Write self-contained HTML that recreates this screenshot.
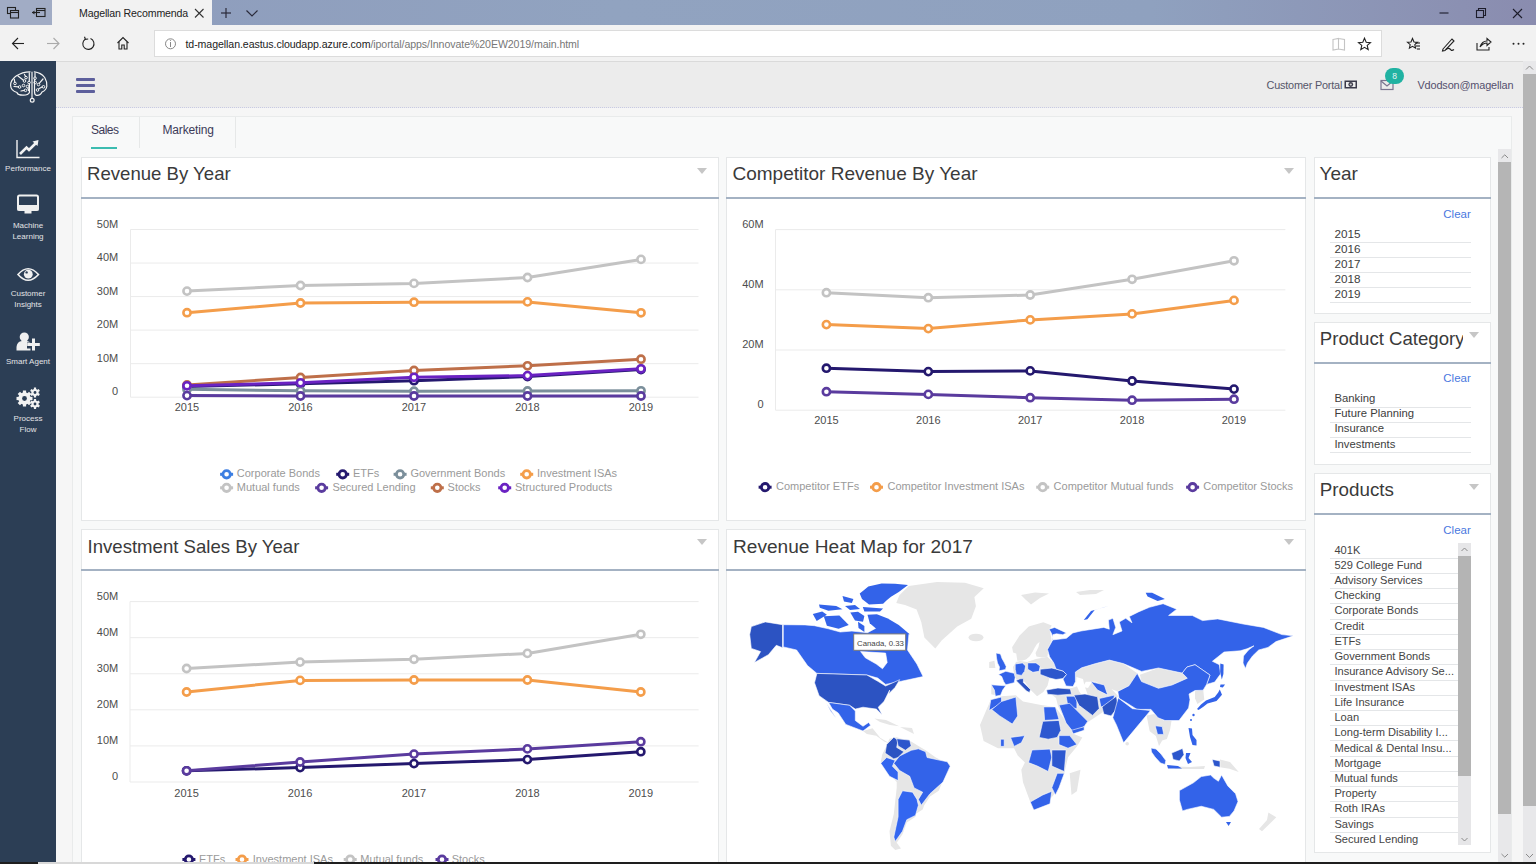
<!DOCTYPE html>
<html><head><meta charset="utf-8"><title>Magellan</title>
<style>
*{margin:0;padding:0;box-sizing:border-box}
html,body{width:1536px;height:864px;overflow:hidden;background:#f6f6f6;font-family:"Liberation Sans",sans-serif}
.a{position:absolute}
#tabstrip{left:0;top:0;width:1536px;height:25px;background:linear-gradient(90deg,#8e9cbc 0%,#91a3c0 40%,#8fa1bf 75%,#8a8caf 100%)}
#tsl{left:0;top:0;width:52px;height:25px;background:#a1acc5}
#acttab{left:52px;top:0;width:160px;height:25px;background:#f2f2f2}
#addrrow{left:0;top:25px;width:1536px;height:36px;background:#f2f2f2}
#addr{left:154px;top:30px;width:1228px;height:27px;background:#fff;border:1px solid #dcdcdc}
#sidebar{left:0;top:61px;width:56px;height:801px;background:#2c3e55}
#header{left:56px;top:61px;width:1467px;height:47px;background:#ececec;border-top:1px solid #dadada;border-bottom:1px dotted #c8cae4}
#content{left:56px;top:108px;width:1467px;height:754px;background:#f6f6f6}
#tabc{left:72px;top:116px;width:1440px;height:760px;background:#f8f9f9;border:1px solid #e9ebeb}
.card{position:absolute;background:#fff;border:1px solid #e5e7e8}
.ttl{position:absolute;color:#3a3a3a;font-size:19px;white-space:nowrap}
.uline{position:absolute;height:2px;background:#a4b2c3}
.tri{position:absolute;width:0;height:0;border-left:5px solid transparent;border-right:5px solid transparent;border-top:6px solid #c6c6c6}
.sl{position:absolute;color:#e3e3e6;font-size:8px;text-align:center;width:56px;left:0;line-height:11.5px}
.ax{font-family:"Liberation Sans",sans-serif;font-size:11px;fill:#4d4d4d}
.lg{font-family:"Liberation Sans",sans-serif;font-size:11px;fill:#9a9a9a}
.fl{position:absolute;font-size:12px;color:#3d3d3d;white-space:nowrap}
.sep{position:absolute;height:1px;background:#e4e6e8}
.clr{position:absolute;color:#4a78e0;font-size:12px}
</style></head><body>
<div id="tabstrip" class="a"></div>
<div id="tsl" class="a"></div>
<svg class="a" style="left:0;top:0" width="60" height="25">
 <g fill="none" stroke="#222" stroke-width="1.1">
  <rect x="7.5" y="7.5" width="8" height="6"/>
  <rect x="10.5" y="10.5" width="8" height="7.5" fill="#a1acc5"/>
  <line x1="10.5" y1="12.5" x2="18.5" y2="12.5"/>
  <rect x="36.5" y="8.5" width="8.5" height="8"/>
  <line x1="36.5" y1="10.5" x2="45" y2="10.5"/>
  <line x1="32" y1="12.5" x2="40" y2="12.5"/>
 </g>
 <path d="M32 12.5 L34.5 10.5 L34.5 14.5 Z" fill="#222"/>
</svg>
<div id="acttab" class="a"></div>
<div class="a" style="left:79px;top:6px;font-size:10.6px;letter-spacing:-0.15px;color:#222;white-space:nowrap;line-height:14px">Magellan Recommenda</div>
<svg class="a" style="left:190px;top:0" width="80" height="25">
 <g stroke="#333" stroke-width="1.1" fill="none">
  <line x1="5" y1="9" x2="13.5" y2="17.5"/><line x1="13.5" y1="9" x2="5" y2="17.5"/>
 </g>
 <g stroke="#2a2a3a" stroke-width="1.2" fill="none">
  <line x1="31" y1="13" x2="41" y2="13"/><line x1="36" y1="8" x2="36" y2="18"/>
  <polyline points="56.5,10.5 62,16 67.5,10.5"/>
 </g>
</svg>
<svg class="a" style="left:1420px;top:0" width="116" height="25">
 <g stroke="#1c1c2a" stroke-width="1.1" fill="none">
  <line x1="19.5" y1="13" x2="28.5" y2="13"/>
  <rect x="56.5" y="10.5" width="7" height="7"/>
  <polyline points="58.5,10.5 58.5,8.5 65.5,8.5 65.5,15.5 63.5,15.5"/>
  <line x1="93" y1="9" x2="102" y2="18"/><line x1="102" y1="9" x2="93" y2="18"/>
 </g>
</svg>
<div id="addrrow" class="a"></div>
<svg class="a" style="left:0;top:25px" width="154" height="36">
 <g fill="none" stroke="#222" stroke-width="1.1">
  <polyline points="18,13 12.5,18.5 18,24"/><line x1="12.5" y1="18.5" x2="24" y2="18.5"/>
 </g>
 <g fill="none" stroke="#aaa" stroke-width="1.1">
  <polyline points="53.5,13 59,18.5 53.5,24"/><line x1="47" y1="18.5" x2="59" y2="18.5"/>
 </g>
 <g fill="none" stroke="#222" stroke-width="1.1">
  <path d="M85.2 14.2 A5.6 5.6 0 1 0 90.5 13.6"/>
  <polyline points="84.5,11.8 85.4,14.3 88.2,14.0"/>
  <polyline points="117.5,18 123,12.5 128.5,18"/>
  <polyline points="119,17 119,24 121.8,24 121.8,20 124.2,20 124.2,24 127,24 127,17"/>
 </g>
</svg>
<div id="addr" class="a"></div>
<svg class="a" style="left:160px;top:33px" width="22" height="22">
 <circle cx="10.5" cy="10.8" r="5" fill="none" stroke="#888" stroke-width="1"/>
 <line x1="10.5" y1="9" x2="10.5" y2="14" stroke="#888" stroke-width="1"/>
 <circle cx="10.5" cy="7.3" r="0.6" fill="#888"/>
</svg>
<div class="a" style="left:185.5px;top:36.5px;font-size:10.6px;letter-spacing:-0.08px;color:#222;white-space:nowrap;line-height:14px">td-magellan.eastus.cloudapp.azure.com<span style="color:#777">/iportal/apps/Innovate%20EW2019/main.html</span></div>
<svg class="a" style="left:1325px;top:30px" width="211" height="28">
 <g fill="none" stroke="#c4c4c4" stroke-width="1.1">
  <path d="M8 9.5 L13.5 8.5 L13.5 19 L8 20 Z M13.5 8.5 L19.5 9.5 L19.5 20 L13.5 19"/>
 </g>
 <path d="M39.5 8.2 L41.2 12.2 L45.5 12.6 L42.2 15.4 L43.2 19.6 L39.5 17.3 L35.8 19.6 L36.8 15.4 L33.5 12.6 L37.8 12.2 Z" fill="none" stroke="#222" stroke-width="1.1"/>
 <g fill="none" stroke="#222" stroke-width="1.1">
  <path d="M87.5 8.5 L89 12 L92.5 12.3 L89.8 14.6 L90.6 18.2 L87.5 16.3 L84.4 18.2 L85.2 14.6 L82.5 12.3 L86 12 Z"/>
  <line x1="90" y1="13" x2="95" y2="13"/><line x1="91" y1="16" x2="95" y2="16"/><line x1="92" y1="19" x2="95" y2="19"/>
  <path d="M118 19 L127 9 L129 11 L120 20.5 L117.5 21 Z"/>
  <path d="M121 19.5 Q124 17 126 20 Q127 21 129 19.5"/>
  <path d="M152 13 L152 20 L164 20 L164 17"/>
  <path d="M155 17 Q157 11 162 11 L162 8.5 L166 12 L162 15.5 L162 13 Q158 13 155 17 Z"/>
 </g>
 <g fill="#222"><circle cx="188.5" cy="13.8" r="1"/><circle cx="193.5" cy="13.8" r="1"/><circle cx="198.5" cy="13.8" r="1"/></g>
</svg>
<div id="sidebar" class="a"></div>
<svg class="a" style="left:0;top:61px" width="56" height="390">
 <g fill="none" stroke="#f4f4f4" stroke-width="1.2" stroke-linecap="round" stroke-linejoin="round">
  <path d="M30,10.8 C26,10.9 21,11.8 16.5,14.8 C12.5,17.5 10.5,21 10.6,24.5 C10.8,28 13.5,30.5 17,31.5 C17.5,33.5 20,34.3 23.5,34.2 C26.5,34.2 28.5,33.6 29.4,31.5 L29.4,23"/>
  <path d="M34.3,10.9 C38,11.3 42,13 44.7,16.5 C46.5,19.5 47.2,22.5 46.8,25.5 C46.3,28 44.5,30 42,31 C41,33.5 39,34.5 36.5,34.3 C35,34.2 34.5,32.5 34.5,30.5 L34.5,18"/>
  <line x1="32" y1="11" x2="32" y2="37.3"/>
  <circle cx="32.2" cy="39.3" r="1.9"/>
  <path d="M24.5,13.5 L25.5,15.2 M18,15 L23.2,19 M29.3,11.8 L29.3,20 M14.2,18 L14.8,21.2 M14,25.5 L18.3,25.8 M28,27.2 L28.6,29.5 M21,30 L24.2,29.3 M35,12 L35,15.8 M43,18 L39.2,22.3 M42,26 L38.8,27.8"/>
 </g>
 <g fill="none" stroke="#f4f4f4" stroke-width="1">
  <circle cx="26" cy="16.6" r="1.3"/><circle cx="24.5" cy="20" r="1.3"/><circle cx="29" cy="21.5" r="1.3"/>
  <circle cx="15" cy="22.5" r="1.3"/><circle cx="19.6" cy="26" r="1.3"/><circle cx="23.5" cy="24.5" r="1.3"/>
  <circle cx="27.5" cy="25.5" r="1.3"/><circle cx="25.5" cy="29.3" r="1.3"/>
  <circle cx="35" cy="17.2" r="1.3"/><circle cx="35.2" cy="21.5" r="1.3"/><circle cx="38.5" cy="23.5" r="1.3"/>
  <circle cx="43.5" cy="25.8" r="1.3"/><circle cx="37.5" cy="29" r="1.3"/>
 </g>
 <!-- performance -->
 <g fill="none" stroke="#f2f2f2">
  <polyline points="17,79 17,96.5 39.5,96.5" stroke-width="1.4"/>
  <polyline points="20,93 26.5,86.5 29,89 37,81" stroke-width="2.6" stroke-linejoin="miter"/>
 </g>
 <path d="M32.5 80.5 L38.5 79 L37.5 85 Z" fill="#f2f2f2"/>
 <!-- monitor -->
 <rect x="18" y="134.5" width="20" height="14.5" rx="1.5" fill="none" stroke="#f0f0f0" stroke-width="2"/>
 <rect x="17.5" y="144" width="21" height="5.5" fill="#f0f0f0"/>
 <rect x="24.5" y="149" width="7" height="3.5" fill="#f0f0f0"/>
 <!-- eye -->
 <path d="M18 213.5 Q28 202 38.5 213.5 Q28 225 18 213.5 Z" fill="none" stroke="#f0f0f0" stroke-width="1.6"/>
 <circle cx="28.3" cy="213.2" r="4.4" fill="#f0f0f0"/>
 <circle cx="26.6" cy="211.4" r="1.2" fill="#2c3e55"/>
 <!-- user plus -->
 <circle cx="24.3" cy="276" r="4.6" fill="#f0f0f0"/>
 <path d="M16.5 289.5 L16.5 286 Q17 280.5 22 280 L27 280 Q29.5 280.5 30.5 282 L30.5 289.5 Z" fill="#f0f0f0"/>
 <rect x="27" y="281.5" width="4" height="6" fill="#2c3e55"/>
 <rect x="27.2" y="282" width="12.6" height="3" fill="#f0f0f0"/>
 <rect x="32" y="277.5" width="3" height="12" fill="#f0f0f0"/>
 <!-- gears -->
 <g fill="#f2f2f2">
  <circle cx="24.5" cy="337.5" r="6.2"/>
  <g transform="translate(24.5 337.5)">
   <rect x="-1.6" y="-8" width="3.2" height="16"/>
   <rect x="-1.6" y="-8" width="3.2" height="16" transform="rotate(45)"/>
   <rect x="-1.6" y="-8" width="3.2" height="16" transform="rotate(90)"/>
   <rect x="-1.6" y="-8" width="3.2" height="16" transform="rotate(135)"/>
  </g>
  <circle cx="35" cy="331.5" r="3.6"/>
  <g transform="translate(35 331.5)">
   <rect x="-1.1" y="-5" width="2.2" height="10"/>
   <rect x="-1.1" y="-5" width="2.2" height="10" transform="rotate(60)"/>
   <rect x="-1.1" y="-5" width="2.2" height="10" transform="rotate(120)"/>
  </g>
  <circle cx="35" cy="343" r="3.6"/>
  <g transform="translate(35 343)">
   <rect x="-1.1" y="-5" width="2.2" height="10"/>
   <rect x="-1.1" y="-5" width="2.2" height="10" transform="rotate(60)"/>
   <rect x="-1.1" y="-5" width="2.2" height="10" transform="rotate(120)"/>
  </g>
 </g>
 <g fill="#2c3e55">
  <circle cx="24.5" cy="337.5" r="2.4"/>
  <circle cx="35" cy="331.5" r="1.4"/>
  <circle cx="35" cy="343" r="1.4"/>
 </g>
</svg>
<div class="sl" style="top:163px">Performance</div>
<div class="sl" style="top:219.5px">Machine<br>Learning</div>
<div class="sl" style="top:287.5px">Customer<br>Insights</div>
<div class="sl" style="top:355.5px">Smart Agent</div>
<div class="sl" style="top:412.5px">Process<br>Flow</div>
<div id="header" class="a"></div>
<div class="a" style="left:76px;top:77.5px;width:18.5px;height:3px;background:#5d5f9c;border-radius:1px"></div>
<div class="a" style="left:76px;top:83.5px;width:18.5px;height:3px;background:#5d5f9c;border-radius:1px"></div>
<div class="a" style="left:76px;top:89.5px;width:18.5px;height:3px;background:#5d5f9c;border-radius:1px"></div>
<div class="a" style="left:1266.5px;top:77.5px;font-size:10.9px;letter-spacing:-0.2px;color:#55566a;white-space:nowrap;line-height:14px">Customer Portal</div>
<svg class="a" style="left:1343px;top:79px" width="16" height="11">
 <rect x="1.5" y="1.5" width="12.5" height="8" fill="#3a3a4a"/>
 <rect x="3" y="3" width="9.5" height="5" fill="#eee"/>
 <circle cx="7.75" cy="5.5" r="2.4" fill="#3a3a4a"/>
 <circle cx="7.75" cy="5.5" r="1.1" fill="#ccc"/>
</svg>
<svg class="a" style="left:1379px;top:78px" width="16" height="14">
 <rect x="2" y="2.5" width="12" height="9" fill="none" stroke="#7a7590" stroke-width="1.2"/>
 <polyline points="2,3 8,8 14,3" fill="none" stroke="#7a7590" stroke-width="1.2"/>
</svg>
<div class="a" style="left:1385px;top:67.5px;width:19px;height:16px;border-radius:8px;background:#20b2a2;color:#e8f5f3;font-size:8.5px;text-align:center;line-height:16px">8</div>
<div class="a" style="left:1417.5px;top:77.5px;font-size:10.9px;letter-spacing:-0.15px;color:#55506e;white-space:nowrap;line-height:14px">Vdodson@magellan</div>
<div id="content" class="a"></div>
<div id="tabc" class="a"></div>
<div class="a" style="left:91px;top:122.5px;font-size:12px;letter-spacing:-0.5px;color:#3c3b58;white-space:nowrap;line-height:14px">Sales</div>
<div class="a" style="left:91px;top:147px;width:26px;height:2px;background:#3cbcb0"></div>
<div class="a" style="left:139px;top:117px;width:1px;height:31px;background:#e6e8e8"></div>
<div class="a" style="left:162.5px;top:122.5px;font-size:12px;letter-spacing:-0.15px;color:#3c3b58;white-space:nowrap;line-height:14px">Marketing</div>
<div class="a" style="left:235px;top:117px;width:1px;height:31px;background:#e6e8e8"></div>

<!-- cards -->
<div class="card" style="left:81px;top:157px;width:638px;height:364px"></div>
<div class="card" style="left:726px;top:157px;width:580px;height:364px"></div>
<div class="card" style="left:81px;top:529px;width:638px;height:400px"></div>
<div class="card" style="left:726px;top:529px;width:580px;height:400px"></div>
<div class="uline" style="left:81px;top:197px;width:638px"></div>
<div class="uline" style="left:726px;top:197px;width:580px"></div>
<div class="uline" style="left:81px;top:569px;width:638px"></div>
<div class="uline" style="left:726px;top:569px;width:580px"></div>
<div class="ttl" style="left:87px;top:163px;font-size:18.6px;line-height:22px">Revenue By Year</div>
<div class="ttl" style="left:732.5px;top:163px;font-size:19px;line-height:22px">Competitor Revenue By Year</div>
<div class="ttl" style="left:87.5px;top:535.5px;font-size:18.6px;line-height:22px">Investment Sales By Year</div>
<div class="ttl" style="left:733px;top:535.5px;font-size:19.1px;line-height:22px">Revenue Heat Map for 2017</div>
<div class="tri" style="left:697px;top:167.5px"></div>
<div class="tri" style="left:1284px;top:167.5px"></div>
<div class="tri" style="left:697px;top:539px"></div>
<div class="tri" style="left:1284px;top:539px"></div>

<!-- filter panels -->
<div class="card" style="left:1314px;top:157px;width:177px;height:157px"></div>
<div class="uline" style="left:1314px;top:197px;width:177px"></div>
<div class="ttl" style="left:1319.5px;top:163px;font-size:19px;line-height:22px">Year</div>
<div class="clr" style="left:1443.3px;top:206.5px;font-size:11.5px;line-height:14px">Clear</div>
<div class="fl" style="left:1334.4px;top:226px;line-height:15.1px;font-size:11.7px">2015<br>2016<br>2017<br>2018<br>2019</div>
<div class="sep" style="left:1330px;top:241.5px;width:141px"></div>
<div class="sep" style="left:1330px;top:256.7px;width:141px"></div>
<div class="sep" style="left:1330px;top:271.8px;width:141px"></div>
<div class="sep" style="left:1330px;top:286.9px;width:141px"></div>
<div class="sep" style="left:1330px;top:302px;width:141px"></div>

<div class="card" style="left:1314px;top:321.5px;width:177px;height:143px"></div>
<div class="uline" style="left:1314px;top:362px;width:177px"></div>
<div class="a" style="left:1319.8px;top:327.5px;width:143px;overflow:hidden"><div class="ttl" style="position:static;font-size:18.6px;line-height:22px">Product Category</div></div>
<div class="tri" style="left:1468.5px;top:332.4px"></div>
<div class="clr" style="left:1443.3px;top:371.2px;font-size:11.5px;line-height:14px">Clear</div>
<div class="fl" style="left:1334.4px;top:391px;line-height:15.2px;font-size:11.3px">Banking<br>Future Planning<br>Insurance<br>Investments</div>
<div class="sep" style="left:1330px;top:406.5px;width:141px"></div>
<div class="sep" style="left:1330px;top:421.7px;width:141px"></div>
<div class="sep" style="left:1330px;top:436.9px;width:141px"></div>
<div class="sep" style="left:1330px;top:452.1px;width:141px"></div>

<div class="card" style="left:1314px;top:473px;width:177px;height:380px"></div>
<div class="uline" style="left:1314px;top:512.5px;width:177px"></div>
<div class="ttl" style="left:1319.8px;top:479px;font-size:18.8px;line-height:22px">Products</div>
<div class="tri" style="left:1468.5px;top:483.5px"></div>
<div class="clr" style="left:1443.3px;top:522.5px;font-size:11.5px;line-height:14px">Clear</div>
<div class="fl" id="prods" style="left:1334.4px;top:542.5px;line-height:15.24px;font-size:11.1px;color:#444">401K<br>529 College Fund<br>Advisory Services<br>Checking<br>Corporate Bonds<br>Credit<br>ETFs<br>Government Bonds<br>Insurance Advisory Se...<br>Investment ISAs<br>Life Insurance<br>Loan<br>Long-term Disability I...<br>Medical &amp; Dental Insu...<br>Mortgage<br>Mutual funds<br>Property<br>Roth IRAs<br>Savings<br>Secured Lending</div>
<div class="sep" style="left:1330px;top:557.60px;width:128.5px"></div>
<div class="sep" style="left:1330px;top:572.84px;width:128.5px"></div>
<div class="sep" style="left:1330px;top:588.08px;width:128.5px"></div>
<div class="sep" style="left:1330px;top:603.32px;width:128.5px"></div>
<div class="sep" style="left:1330px;top:618.56px;width:128.5px"></div>
<div class="sep" style="left:1330px;top:633.80px;width:128.5px"></div>
<div class="sep" style="left:1330px;top:649.04px;width:128.5px"></div>
<div class="sep" style="left:1330px;top:664.28px;width:128.5px"></div>
<div class="sep" style="left:1330px;top:679.52px;width:128.5px"></div>
<div class="sep" style="left:1330px;top:694.76px;width:128.5px"></div>
<div class="sep" style="left:1330px;top:710.00px;width:128.5px"></div>
<div class="sep" style="left:1330px;top:725.24px;width:128.5px"></div>
<div class="sep" style="left:1330px;top:740.48px;width:128.5px"></div>
<div class="sep" style="left:1330px;top:755.72px;width:128.5px"></div>
<div class="sep" style="left:1330px;top:770.96px;width:128.5px"></div>
<div class="sep" style="left:1330px;top:786.20px;width:128.5px"></div>
<div class="sep" style="left:1330px;top:801.44px;width:128.5px"></div>
<div class="sep" style="left:1330px;top:816.68px;width:128.5px"></div>
<div class="sep" style="left:1330px;top:831.92px;width:128.5px"></div>
<div class="a" style="left:1458.3px;top:543.3px;width:12.5px;height:302px;background:#e6e6e8"></div>
<div class="a" style="left:1458.3px;top:555.8px;width:12.5px;height:219.8px;background:#b4b4b4"></div>
<svg class="a" style="left:1458px;top:543px" width="13" height="302"><polyline points="3.5,8 6.5,5 9.5,8" fill="none" stroke="#8a8a8a" stroke-width="1"/><polyline points="3.5,295 6.5,298 9.5,295" fill="none" stroke="#8a8a8a" stroke-width="1"/></svg>
<svg class="a" style="left:0;top:0" width="1536" height="864">
<line x1="130.5" y1="397.2" x2="698.5" y2="397.2" stroke="#ebebeb" stroke-width="1"/>
<line x1="130.5" y1="363.66" x2="698.5" y2="363.66" stroke="#ebebeb" stroke-width="1"/>
<line x1="130.5" y1="330.12" x2="698.5" y2="330.12" stroke="#ebebeb" stroke-width="1"/>
<line x1="130.5" y1="296.58" x2="698.5" y2="296.58" stroke="#ebebeb" stroke-width="1"/>
<line x1="130.5" y1="263.04" x2="698.5" y2="263.04" stroke="#ebebeb" stroke-width="1"/>
<line x1="130.5" y1="229.5" x2="698.5" y2="229.5" stroke="#ebebeb" stroke-width="1"/>
<line x1="130.5" y1="229.5" x2="130.5" y2="397.2" stroke="#ebebeb" stroke-width="1"/>
<text class="ax" x="118.2" y="395.4" text-anchor="end">0</text>
<text class="ax" x="118.2" y="361.86" text-anchor="end">10M</text>
<text class="ax" x="118.2" y="328.32" text-anchor="end">20M</text>
<text class="ax" x="118.2" y="294.78" text-anchor="end">30M</text>
<text class="ax" x="118.2" y="261.24" text-anchor="end">40M</text>
<text class="ax" x="118.2" y="227.7" text-anchor="end">50M</text>
<text class="ax" x="187" y="411.2" text-anchor="middle">2015</text>
<text class="ax" x="300.5" y="411.2" text-anchor="middle">2016</text>
<text class="ax" x="414" y="411.2" text-anchor="middle">2017</text>
<text class="ax" x="527.5" y="411.2" text-anchor="middle">2018</text>
<text class="ax" x="641" y="411.2" text-anchor="middle">2019</text>
<polyline points="187,386.5 300.5,383.8 414,380.7 527.5,376.5 641,369.5" fill="none" stroke="#24186e" stroke-width="3" stroke-linejoin="round"/>
<circle cx="187" cy="386.5" r="3.6" fill="#fff" stroke="#24186e" stroke-width="2.6"/>
<circle cx="300.5" cy="383.8" r="3.6" fill="#fff" stroke="#24186e" stroke-width="2.6"/>
<circle cx="414" cy="380.7" r="3.6" fill="#fff" stroke="#24186e" stroke-width="2.6"/>
<circle cx="527.5" cy="376.5" r="3.6" fill="#fff" stroke="#24186e" stroke-width="2.6"/>
<circle cx="641" cy="369.5" r="3.6" fill="#fff" stroke="#24186e" stroke-width="2.6"/>
<polyline points="187,389.2 300.5,390.8 414,391.2 527.5,391 641,390.8" fill="none" stroke="#7b8f9b" stroke-width="3" stroke-linejoin="round"/>
<circle cx="187" cy="389.2" r="3.6" fill="#fff" stroke="#7b8f9b" stroke-width="2.6"/>
<circle cx="300.5" cy="390.8" r="3.6" fill="#fff" stroke="#7b8f9b" stroke-width="2.6"/>
<circle cx="414" cy="391.2" r="3.6" fill="#fff" stroke="#7b8f9b" stroke-width="2.6"/>
<circle cx="527.5" cy="391" r="3.6" fill="#fff" stroke="#7b8f9b" stroke-width="2.6"/>
<circle cx="641" cy="390.8" r="3.6" fill="#fff" stroke="#7b8f9b" stroke-width="2.6"/>
<polyline points="187,312.7 300.5,303 414,302.2 527.5,301.9 641,312.8" fill="none" stroke="#f49d4a" stroke-width="3" stroke-linejoin="round"/>
<circle cx="187" cy="312.7" r="3.6" fill="#fff" stroke="#f49d4a" stroke-width="2.6"/>
<circle cx="300.5" cy="303" r="3.6" fill="#fff" stroke="#f49d4a" stroke-width="2.6"/>
<circle cx="414" cy="302.2" r="3.6" fill="#fff" stroke="#f49d4a" stroke-width="2.6"/>
<circle cx="527.5" cy="301.9" r="3.6" fill="#fff" stroke="#f49d4a" stroke-width="2.6"/>
<circle cx="641" cy="312.8" r="3.6" fill="#fff" stroke="#f49d4a" stroke-width="2.6"/>
<polyline points="187,291.1 300.5,285.5 414,283.4 527.5,277.5 641,259.4" fill="none" stroke="#c3c3c3" stroke-width="3" stroke-linejoin="round"/>
<circle cx="187" cy="291.1" r="3.6" fill="#fff" stroke="#c3c3c3" stroke-width="2.6"/>
<circle cx="300.5" cy="285.5" r="3.6" fill="#fff" stroke="#c3c3c3" stroke-width="2.6"/>
<circle cx="414" cy="283.4" r="3.6" fill="#fff" stroke="#c3c3c3" stroke-width="2.6"/>
<circle cx="527.5" cy="277.5" r="3.6" fill="#fff" stroke="#c3c3c3" stroke-width="2.6"/>
<circle cx="641" cy="259.4" r="3.6" fill="#fff" stroke="#c3c3c3" stroke-width="2.6"/>
<polyline points="187,395.6 300.5,396 414,396 527.5,396 641,396" fill="none" stroke="#5a3b9e" stroke-width="3" stroke-linejoin="round"/>
<circle cx="187" cy="395.6" r="3.6" fill="#fff" stroke="#5a3b9e" stroke-width="2.6"/>
<circle cx="300.5" cy="396" r="3.6" fill="#fff" stroke="#5a3b9e" stroke-width="2.6"/>
<circle cx="414" cy="396" r="3.6" fill="#fff" stroke="#5a3b9e" stroke-width="2.6"/>
<circle cx="527.5" cy="396" r="3.6" fill="#fff" stroke="#5a3b9e" stroke-width="2.6"/>
<circle cx="641" cy="396" r="3.6" fill="#fff" stroke="#5a3b9e" stroke-width="2.6"/>
<polyline points="187,385 300.5,377.5 414,370.5 527.5,365.8 641,359.2" fill="none" stroke="#be6f49" stroke-width="3" stroke-linejoin="round"/>
<circle cx="187" cy="385" r="3.6" fill="#fff" stroke="#be6f49" stroke-width="2.6"/>
<circle cx="300.5" cy="377.5" r="3.6" fill="#fff" stroke="#be6f49" stroke-width="2.6"/>
<circle cx="414" cy="370.5" r="3.6" fill="#fff" stroke="#be6f49" stroke-width="2.6"/>
<circle cx="527.5" cy="365.8" r="3.6" fill="#fff" stroke="#be6f49" stroke-width="2.6"/>
<circle cx="641" cy="359.2" r="3.6" fill="#fff" stroke="#be6f49" stroke-width="2.6"/>
<polyline points="187,385.8 300.5,382.8 414,377.3 527.5,375.6 641,368.8" fill="none" stroke="#6a22c2" stroke-width="3" stroke-linejoin="round"/>
<circle cx="187" cy="385.8" r="3.6" fill="#fff" stroke="#6a22c2" stroke-width="2.6"/>
<circle cx="300.5" cy="382.8" r="3.6" fill="#fff" stroke="#6a22c2" stroke-width="2.6"/>
<circle cx="414" cy="377.3" r="3.6" fill="#fff" stroke="#6a22c2" stroke-width="2.6"/>
<circle cx="527.5" cy="375.6" r="3.6" fill="#fff" stroke="#6a22c2" stroke-width="2.6"/>
<circle cx="641" cy="368.8" r="3.6" fill="#fff" stroke="#6a22c2" stroke-width="2.6"/>
<line x1="220.1" y1="474.3" x2="233.1" y2="474.3" stroke="#3c7ee2" stroke-width="3"/>
<circle cx="226.6" cy="474.3" r="3.7" fill="#fff" stroke="#3c7ee2" stroke-width="2.8"/>
<text class="lg" x="236.8" y="477.3">Corporate Bonds</text>
<line x1="336.2" y1="474.3" x2="349.2" y2="474.3" stroke="#24186e" stroke-width="3"/>
<circle cx="342.7" cy="474.3" r="3.7" fill="#fff" stroke="#24186e" stroke-width="2.8"/>
<text class="lg" x="353" y="477.3">ETFs</text>
<line x1="393.6" y1="474.3" x2="406.6" y2="474.3" stroke="#7b8f9b" stroke-width="3"/>
<circle cx="400.1" cy="474.3" r="3.7" fill="#fff" stroke="#7b8f9b" stroke-width="2.8"/>
<text class="lg" x="410.4" y="477.3">Government Bonds</text>
<line x1="520.2" y1="474.3" x2="533.2" y2="474.3" stroke="#f49d4a" stroke-width="3"/>
<circle cx="526.7" cy="474.3" r="3.7" fill="#fff" stroke="#f49d4a" stroke-width="2.8"/>
<text class="lg" x="537" y="477.3">Investment ISAs</text>
<line x1="220.1" y1="487.8" x2="233.1" y2="487.8" stroke="#c3c3c3" stroke-width="3"/>
<circle cx="226.6" cy="487.8" r="3.7" fill="#fff" stroke="#c3c3c3" stroke-width="2.8"/>
<text class="lg" x="236.8" y="490.8">Mutual funds</text>
<line x1="315.1" y1="487.8" x2="328.1" y2="487.8" stroke="#5a3b9e" stroke-width="3"/>
<circle cx="321.6" cy="487.8" r="3.7" fill="#fff" stroke="#5a3b9e" stroke-width="2.8"/>
<text class="lg" x="332.4" y="490.8">Secured Lending</text>
<line x1="430.8" y1="487.8" x2="443.8" y2="487.8" stroke="#be6f49" stroke-width="3"/>
<circle cx="437.3" cy="487.8" r="3.7" fill="#fff" stroke="#be6f49" stroke-width="2.8"/>
<text class="lg" x="447.6" y="490.8">Stocks</text>
<line x1="498.2" y1="487.8" x2="511.2" y2="487.8" stroke="#6a22c2" stroke-width="3"/>
<circle cx="504.7" cy="487.8" r="3.7" fill="#fff" stroke="#6a22c2" stroke-width="2.8"/>
<text class="lg" x="515" y="490.8">Structured Products</text>
<line x1="775.5" y1="410.2" x2="1285.4" y2="410.2" stroke="#ebebeb" stroke-width="1"/>
<line x1="775.5" y1="350" x2="1285.4" y2="350" stroke="#ebebeb" stroke-width="1"/>
<line x1="775.5" y1="289.8" x2="1285.4" y2="289.8" stroke="#ebebeb" stroke-width="1"/>
<line x1="775.5" y1="229.6" x2="1285.4" y2="229.6" stroke="#ebebeb" stroke-width="1"/>
<line x1="775.5" y1="229.6" x2="775.5" y2="410.2" stroke="#ebebeb" stroke-width="1"/>
<text class="ax" x="763.6" y="408.4" text-anchor="end">0</text>
<text class="ax" x="763.6" y="348.2" text-anchor="end">20M</text>
<text class="ax" x="763.6" y="288" text-anchor="end">40M</text>
<text class="ax" x="763.6" y="227.8" text-anchor="end">60M</text>
<text class="ax" x="826.4" y="424.2" text-anchor="middle">2015</text>
<text class="ax" x="928.3" y="424.2" text-anchor="middle">2016</text>
<text class="ax" x="1030.2" y="424.2" text-anchor="middle">2017</text>
<text class="ax" x="1132.1" y="424.2" text-anchor="middle">2018</text>
<text class="ax" x="1234" y="424.2" text-anchor="middle">2019</text>
<polyline points="826.4,368.2 928.3,371.6 1030.2,370.9 1132.1,381 1234,389.1" fill="none" stroke="#24186e" stroke-width="3" stroke-linejoin="round"/>
<circle cx="826.4" cy="368.2" r="3.6" fill="#fff" stroke="#24186e" stroke-width="2.6"/>
<circle cx="928.3" cy="371.6" r="3.6" fill="#fff" stroke="#24186e" stroke-width="2.6"/>
<circle cx="1030.2" cy="370.9" r="3.6" fill="#fff" stroke="#24186e" stroke-width="2.6"/>
<circle cx="1132.1" cy="381" r="3.6" fill="#fff" stroke="#24186e" stroke-width="2.6"/>
<circle cx="1234" cy="389.1" r="3.6" fill="#fff" stroke="#24186e" stroke-width="2.6"/>
<polyline points="826.4,324.6 928.3,328.6 1030.2,319.9 1132.1,313.9 1234,300.4" fill="none" stroke="#f49d4a" stroke-width="3" stroke-linejoin="round"/>
<circle cx="826.4" cy="324.6" r="3.6" fill="#fff" stroke="#f49d4a" stroke-width="2.6"/>
<circle cx="928.3" cy="328.6" r="3.6" fill="#fff" stroke="#f49d4a" stroke-width="2.6"/>
<circle cx="1030.2" cy="319.9" r="3.6" fill="#fff" stroke="#f49d4a" stroke-width="2.6"/>
<circle cx="1132.1" cy="313.9" r="3.6" fill="#fff" stroke="#f49d4a" stroke-width="2.6"/>
<circle cx="1234" cy="300.4" r="3.6" fill="#fff" stroke="#f49d4a" stroke-width="2.6"/>
<polyline points="826.4,292.7 928.3,297.7 1030.2,295 1132.1,279.3 1234,260.8" fill="none" stroke="#c3c3c3" stroke-width="3" stroke-linejoin="round"/>
<circle cx="826.4" cy="292.7" r="3.6" fill="#fff" stroke="#c3c3c3" stroke-width="2.6"/>
<circle cx="928.3" cy="297.7" r="3.6" fill="#fff" stroke="#c3c3c3" stroke-width="2.6"/>
<circle cx="1030.2" cy="295" r="3.6" fill="#fff" stroke="#c3c3c3" stroke-width="2.6"/>
<circle cx="1132.1" cy="279.3" r="3.6" fill="#fff" stroke="#c3c3c3" stroke-width="2.6"/>
<circle cx="1234" cy="260.8" r="3.6" fill="#fff" stroke="#c3c3c3" stroke-width="2.6"/>
<polyline points="826.4,391.7 928.3,394.4 1030.2,397.7 1132.1,400.2 1234,399.2" fill="none" stroke="#5a3b9e" stroke-width="3" stroke-linejoin="round"/>
<circle cx="826.4" cy="391.7" r="3.6" fill="#fff" stroke="#5a3b9e" stroke-width="2.6"/>
<circle cx="928.3" cy="394.4" r="3.6" fill="#fff" stroke="#5a3b9e" stroke-width="2.6"/>
<circle cx="1030.2" cy="397.7" r="3.6" fill="#fff" stroke="#5a3b9e" stroke-width="2.6"/>
<circle cx="1132.1" cy="400.2" r="3.6" fill="#fff" stroke="#5a3b9e" stroke-width="2.6"/>
<circle cx="1234" cy="399.2" r="3.6" fill="#fff" stroke="#5a3b9e" stroke-width="2.6"/>
<line x1="758.6" y1="487.2" x2="771.6" y2="487.2" stroke="#24186e" stroke-width="3"/>
<circle cx="765.1" cy="487.2" r="3.7" fill="#fff" stroke="#24186e" stroke-width="2.8"/>
<text class="lg" x="776" y="490.2">Competitor ETFs</text>
<line x1="870" y1="487.2" x2="883" y2="487.2" stroke="#f49d4a" stroke-width="3"/>
<circle cx="876.5" cy="487.2" r="3.7" fill="#fff" stroke="#f49d4a" stroke-width="2.8"/>
<text class="lg" x="887.5" y="490.2">Competitor Investment ISAs</text>
<line x1="1036.2" y1="487.2" x2="1049.2" y2="487.2" stroke="#c3c3c3" stroke-width="3"/>
<circle cx="1042.7" cy="487.2" r="3.7" fill="#fff" stroke="#c3c3c3" stroke-width="2.8"/>
<text class="lg" x="1053.6" y="490.2">Competitor Mutual funds</text>
<line x1="1186.1" y1="487.2" x2="1199.1" y2="487.2" stroke="#5a3b9e" stroke-width="3"/>
<circle cx="1192.6" cy="487.2" r="3.7" fill="#fff" stroke="#5a3b9e" stroke-width="2.8"/>
<text class="lg" x="1203.2" y="490.2">Competitor Stocks</text>
<line x1="130" y1="782" x2="698.6" y2="782" stroke="#ebebeb" stroke-width="1"/>
<line x1="130" y1="745.92" x2="698.6" y2="745.92" stroke="#ebebeb" stroke-width="1"/>
<line x1="130" y1="709.84" x2="698.6" y2="709.84" stroke="#ebebeb" stroke-width="1"/>
<line x1="130" y1="673.76" x2="698.6" y2="673.76" stroke="#ebebeb" stroke-width="1"/>
<line x1="130" y1="637.68" x2="698.6" y2="637.68" stroke="#ebebeb" stroke-width="1"/>
<line x1="130" y1="601.6" x2="698.6" y2="601.6" stroke="#ebebeb" stroke-width="1"/>
<line x1="130" y1="601.6" x2="130" y2="782" stroke="#ebebeb" stroke-width="1"/>
<text class="ax" x="118.2" y="780" text-anchor="end">0</text>
<text class="ax" x="118.2" y="743.92" text-anchor="end">10M</text>
<text class="ax" x="118.2" y="707.84" text-anchor="end">20M</text>
<text class="ax" x="118.2" y="671.76" text-anchor="end">30M</text>
<text class="ax" x="118.2" y="635.68" text-anchor="end">40M</text>
<text class="ax" x="118.2" y="599.6" text-anchor="end">50M</text>
<text class="ax" x="186.6" y="797.1" text-anchor="middle">2015</text>
<text class="ax" x="300.1" y="797.1" text-anchor="middle">2016</text>
<text class="ax" x="414" y="797.1" text-anchor="middle">2017</text>
<text class="ax" x="527.4" y="797.1" text-anchor="middle">2018</text>
<text class="ax" x="640.8" y="797.1" text-anchor="middle">2019</text>
<polyline points="186.6,770.8 300.1,767.6 414,763.6 527.4,759.6 640.8,751.7" fill="none" stroke="#24186e" stroke-width="3" stroke-linejoin="round"/>
<circle cx="186.6" cy="770.8" r="3.6" fill="#fff" stroke="#24186e" stroke-width="2.6"/>
<circle cx="300.1" cy="767.6" r="3.6" fill="#fff" stroke="#24186e" stroke-width="2.6"/>
<circle cx="414" cy="763.6" r="3.6" fill="#fff" stroke="#24186e" stroke-width="2.6"/>
<circle cx="527.4" cy="759.6" r="3.6" fill="#fff" stroke="#24186e" stroke-width="2.6"/>
<circle cx="640.8" cy="751.7" r="3.6" fill="#fff" stroke="#24186e" stroke-width="2.6"/>
<polyline points="186.6,692 300.1,680.4 414,680 527.4,680 640.8,692" fill="none" stroke="#f49d4a" stroke-width="3" stroke-linejoin="round"/>
<circle cx="186.6" cy="692" r="3.6" fill="#fff" stroke="#f49d4a" stroke-width="2.6"/>
<circle cx="300.1" cy="680.4" r="3.6" fill="#fff" stroke="#f49d4a" stroke-width="2.6"/>
<circle cx="414" cy="680" r="3.6" fill="#fff" stroke="#f49d4a" stroke-width="2.6"/>
<circle cx="527.4" cy="680" r="3.6" fill="#fff" stroke="#f49d4a" stroke-width="2.6"/>
<circle cx="640.8" cy="692" r="3.6" fill="#fff" stroke="#f49d4a" stroke-width="2.6"/>
<polyline points="186.6,668.5 300.1,662.1 414,659.3 527.4,653.4 640.8,634.3" fill="none" stroke="#c3c3c3" stroke-width="3" stroke-linejoin="round"/>
<circle cx="186.6" cy="668.5" r="3.6" fill="#fff" stroke="#c3c3c3" stroke-width="2.6"/>
<circle cx="300.1" cy="662.1" r="3.6" fill="#fff" stroke="#c3c3c3" stroke-width="2.6"/>
<circle cx="414" cy="659.3" r="3.6" fill="#fff" stroke="#c3c3c3" stroke-width="2.6"/>
<circle cx="527.4" cy="653.4" r="3.6" fill="#fff" stroke="#c3c3c3" stroke-width="2.6"/>
<circle cx="640.8" cy="634.3" r="3.6" fill="#fff" stroke="#c3c3c3" stroke-width="2.6"/>
<polyline points="186.6,770.8 300.1,762 414,754.1 527.4,748.9 640.8,741.7" fill="none" stroke="#5a3b9e" stroke-width="3" stroke-linejoin="round"/>
<circle cx="186.6" cy="770.8" r="3.6" fill="#fff" stroke="#5a3b9e" stroke-width="2.6"/>
<circle cx="300.1" cy="762" r="3.6" fill="#fff" stroke="#5a3b9e" stroke-width="2.6"/>
<circle cx="414" cy="754.1" r="3.6" fill="#fff" stroke="#5a3b9e" stroke-width="2.6"/>
<circle cx="527.4" cy="748.9" r="3.6" fill="#fff" stroke="#5a3b9e" stroke-width="2.6"/>
<circle cx="640.8" cy="741.7" r="3.6" fill="#fff" stroke="#5a3b9e" stroke-width="2.6"/>
<line x1="182.4" y1="859.5" x2="195.4" y2="859.5" stroke="#24186e" stroke-width="3"/>
<circle cx="188.9" cy="859.5" r="3.7" fill="#fff" stroke="#24186e" stroke-width="2.8"/>
<text class="lg" x="199" y="862.5">ETFs</text>
<line x1="235.5" y1="859.5" x2="248.5" y2="859.5" stroke="#f49d4a" stroke-width="3"/>
<circle cx="242" cy="859.5" r="3.7" fill="#fff" stroke="#f49d4a" stroke-width="2.8"/>
<text class="lg" x="252.8" y="862.5">Investment ISAs</text>
<line x1="343.7" y1="859.5" x2="356.7" y2="859.5" stroke="#c3c3c3" stroke-width="3"/>
<circle cx="350.2" cy="859.5" r="3.7" fill="#fff" stroke="#c3c3c3" stroke-width="2.8"/>
<text class="lg" x="360.3" y="862.5">Mutual funds</text>
<line x1="435.5" y1="859.5" x2="448.5" y2="859.5" stroke="#5a3b9e" stroke-width="3"/>
<circle cx="442" cy="859.5" r="3.7" fill="#fff" stroke="#5a3b9e" stroke-width="2.8"/>
<text class="lg" x="451.7" y="862.5">Stocks</text>
<g id="map" stroke-linejoin="round">
<g fill="#e6e6e6" stroke="none">
 <!-- Greenland -->
 <path d="M908.75,586 L936.9,582 L965,582.8 L983.75,588.3 L974.4,596.9 L975.9,606.25 L971.25,618.75 L957.2,626.6 L941.6,640.6 L935.3,648.4 L924.4,637.5 L921.25,621.9 L916.6,609.4 L905,605 L896.25,603.1 L899.4,595.3 Z"/>
 <ellipse cx="976" cy="637.5" rx="7.5" ry="3.8"/>
 <path d="M1021,595 L1035,592.5 L1049,593.5 L1040,598 L1031,604.5 L1026,600 Z"/>
 <!-- Scandinavia + Finland -->
 <path d="M1012.1,647.3 L1019.4,635.8 L1028.75,626.5 L1043.3,622.3 L1051.7,625.4 L1049.6,629.6 L1051.7,640 L1048.5,648.3 L1047.5,656.7 L1042,657.5 L1036.5,656.5 L1035.5,653 L1038.5,647 L1039.5,642 L1037,644 L1034.5,648 L1032.5,652 L1029.5,656.5 L1026,659.5 L1022.5,660.5 L1017.3,660.8 L1016.25,653.5 L1013.1,652.5 Z"/>
 <!-- Baltic/Belarus/central Europe/Balkans -->
 <path d="M1036,659 L1047.5,656.7 L1053.75,662.9 L1057.9,667.1 L1052,669 L1049.6,677.5 L1047.5,685.8 L1043.3,692.1 L1037.1,696.25 L1030.8,690 L1024.6,681.7 L1016.25,679.6 L1014,674 L1013,667 L1016,662 L1020,661 L1027,662 Z"/>
 <!-- Ireland / Portugal -->
 <path d="M989.2,661.9 L994.4,660.8 L995.4,668.1 L989.2,668.1 Z"/>
 <path d="M991.25,685.8 L994.4,687.9 L995.4,695.2 L991.25,694.2 Z"/>
 <!-- Africa -->
 <path d="M990.8,699.7 L1001.5,696.2 L1015.9,695.3 L1023,701.5 L1041,705.1 L1055.4,706.9 L1066.1,721.3 L1073.3,733.8 L1082.3,737.4 L1076.9,746.4 L1068,757.2 L1064.3,773.3 L1059,782.3 L1053.6,794.9 L1046.4,803.8 L1033.8,810.1 L1030.3,802 L1023,782.3 L1021.3,769.7 L1024.9,762.6 L1017.7,755.4 L1014.1,748.2 L998,748.2 L983.6,741 L980,724.9 L985.4,712.3 Z"/>
 <path d="M1069.7,773.3 L1080.5,769.7 L1076.9,791.3 L1071.5,794.9 Z"/>
 <!-- Middle east / Caucasus base -->
 <path d="M1046,690 L1072,688 L1078,686 L1088,688 L1092,682 L1107,684 L1118,696 L1112,706 L1100,714 L1088,722 L1082,728 L1072,733 L1066,722 L1058,706 L1056,698 Z"/>
 <!-- Kazakhstan -->
 <path d="M1075.4,672 L1081.7,667.8 L1095.6,663.6 L1109.4,660.1 L1123.3,663.6 L1137.2,673.3 L1128.9,685.8 L1117.8,691.4 L1106.7,687.2 L1095.6,681.7 L1085.8,681.7 L1080.3,691.4 L1075.4,681.7 Z"/>
 <!-- Mongolia -->
 <path d="M1139.9,674.8 L1158.5,668 L1182.2,673.1 L1187.3,678.2 L1172,685 L1158.5,688.3 L1141.6,681.6 Z"/>
 <!-- Korea -->
 <path d="M1195,691.3 L1203.1,689 L1204.3,699.4 L1197.4,704 L1195,698.3 Z"/>
 <!-- SE Asia mainland -->
 <path d="M1146.6,715.6 L1154.4,714 L1163.75,720.3 L1171.6,720.3 L1170,730 L1166.9,739 L1162.2,740.6 L1159,746 L1155.9,736 L1149.7,731.25 Z"/>
 <!-- Indonesia small / PNG east -->
 <path d="M1166.9,765.6 L1176.25,766.5 L1190,767 L1205,766 L1204,769 L1176.25,769 Z"/>
 <path d="M1220,759.4 L1230,762 L1238.75,771.9 L1229.4,768.75 L1220,767.2 Z"/>
 <!-- New Zealand -->
 <path d="M1268.4,812.5 L1276.25,817.2 L1270,823.4 L1262,831.25 L1259,829 L1267,820 Z"/>
 <!-- Central America + Caribbean -->
 <path d="M863,731 L872.5,728.2 L880.2,737.7 L889.7,743.4 L884,741.5 L876.3,735.8 L866.8,733.9 Z"/>
 <path d="M874.4,718.6 L886,720 L899.2,726.3 L890,725 L880,722 Z"/>
 <path d="M900,727 L912,728 L914,734 L908,731 Z"/>
 <!-- South America -->
 <path d="M889.5,738.7 L896.7,737.2 L911.2,741.6 L918.4,745.9 L925.6,750.3 L935.8,757.5 L950.2,764.7 L947.3,772 L943,780.6 L938.7,790.8 L930,796.5 L924.2,805.2 L922.7,809.6 L915.5,813.9 L915.5,816.8 L906.8,822.6 L902.5,834.2 L896.7,842.8 L901,848.6 L895.25,850.1 L890.9,845.7 L889.5,831.3 L893.8,813.9 L896.7,787.9 L896.7,782.1 L883.7,767.6 L880.8,761.8 L882.2,754.6 L885.1,748.8 Z"/>
 <circle cx="1127.2" cy="743.7" r="1.8"/>
 <!-- Arctic small islands -->
 <path d="M1076,592 L1090,590 L1104,590 L1096,594 L1080,595 Z"/>
</g>
<path fill="#ffffff" d="M1076.5,677 L1083,679 L1084.5,686 L1087.5,694 L1083,697 L1079,691 L1076,684 Z"/>
<g stroke="#ffffff" stroke-width="0.6">
 <!-- Alaska -->
 <path fill="#2c53c2" d="M751.3,626.6 L765.3,621.9 L782.5,624.7 L782.5,647.7 L776.3,645.3 L768.4,654.7 L754.4,662.5 L760.6,651.6 L751.3,648.4 L749.7,634.4 Z"/>
 <!-- Canada mainland (with Hudson Bay hole) -->
 <path fill="#3363e9" fill-rule="evenodd" d="M783.3,624.7 L805,624.9 L814.4,625.7 L828.4,628.8 L840.2,632 L851.9,631.1 L867.5,632.7 L879.2,626.4 L890.9,631.9 L901.9,629.6 L908.9,634.25 L907.5,650 L916.9,664 L923.1,676.6 L901.25,681.25 L885.6,684.4 L877.8,678.1 L866.9,675 L816.9,673.4 L807.5,665.6 L796.6,650 L783.3,646.9 Z M860.6,651.6 L885.6,653.1 L887.2,662.5 L882.5,668.75 L876.25,664 L865.3,657.8 Z"/>
 <g fill="#3363e9" stroke="none">
  <!-- Ellesmere -->
  <path d="M868.3,586.6 L881.6,583.5 L895,583.8 L908,585 L898.75,592 L891,596.75 L887,600 L883.1,603.8 L869,604.5 L862,599 L859.7,593.6 L864.4,589.7 Z"/>
  <path d="M862.8,606.9 L883.1,608.5 L880,611.6 L864.4,611.6 Z"/>
  <path d="M867.5,614.7 L876.9,614.3 L887.8,618.6 L898.75,624.9 L909.7,634.25 L890.9,635 L880,631.9 L869.8,623.3 Z"/>
  <path d="M850.3,612.4 L858,611.8 L864.4,616 L863,621.75 L855,620.5 Z"/>
  <path d="M823.75,616.3 L839.4,615.5 L848.75,624.9 L838.6,628.8 L826.9,625.7 Z"/>
  <path d="M812.8,613.9 L822.2,611.6 L826.9,614.7 L816.7,621 Z"/>
  <path d="M819,604.6 L836.25,606.1 L842.5,609.25 L828.4,610.8 L819.8,607.7 Z"/>
  <path d="M842.5,596 L853.4,599.1 L851.9,603 L844,601.4 Z"/>
  <path d="M845,606 L855,605 L860,609 L850,610 Z"/>
  <path d="M858,621.75 L864.4,626 L864.4,631.9 L858.5,628 Z"/>
 </g>
 <!-- USA -->
 <path fill="#2c53c2" d="M816.9,673.4 L866.9,675 L877.8,681.25 L885.6,686 L899.7,679.7 L895,687.5 L888.75,693.75 L889.7,690 L884,701.5 L878.2,707.2 L882.1,714.8 L876.3,709.1 L863,707.2 L855.3,709.1 L849.6,705.3 L828.6,702.4 L819.1,695.7 L814.5,682.8 Z"/>
 <!-- Mexico -->
 <path fill="#3363e9" d="M828.6,702.4 L849.6,705.3 L855.3,711 L855.3,720.5 L863,726.3 L868.7,722.4 L870.6,725.3 L863,731 L845.8,724.4 L838.2,712.9 L832.4,709.1 Z M826.7,703.4 L836.3,718.6 L830.5,711 Z"/>
 <!-- Colombia -->
 <path fill="#2c53c2" d="M886.6,744.5 L893.8,737.2 L898.1,740.1 L896.7,747.4 L903.9,751.7 L898.1,757.5 L893.8,758.9 L885.1,753.1 Z"/>
 <!-- Venezuela -->
 <path fill="#2c56cc" d="M896.7,738.7 L909.7,740.1 L911.2,745.9 L905.4,750.3 L898.1,745.9 Z"/>
 <!-- Peru -->
 <path fill="#3366f0" d="M880.8,763.3 L886.6,757.5 L895.25,760.4 L892.4,766.2 L898.1,772 L898.1,780.6 L889.5,776.3 Z"/>
 <!-- Brazil -->
 <path fill="#3363e9" d="M893.8,763.3 L899.6,756 L911.2,750.3 L918.4,748.8 L925.6,751.7 L927.1,757.5 L947.3,761.8 L950.2,766.2 L943,782.1 L930,793.7 L921.3,805.2 L918.4,799.4 L922.7,792.2 L914.1,787.9 L909.7,776.3 L899.6,770.5 Z"/>
 <!-- Argentina -->
 <path fill="#3366f0" d="M902.5,790.8 L912.6,792.2 L917,799.4 L918.4,805.2 L915.5,815.4 L906.8,819.7 L902.5,831.3 L895.25,841.4 L893.8,837.1 L898.1,816.8 L898.1,799.4 Z"/>
 <!-- UK -->
 <path fill="#3363e9" d="M996,653 L1000.5,654 L1002,658.5 L1004,662 L1006.2,666.5 L1005.5,669.5 L999,670.8 L999.5,667 L997.5,663 L996.5,658 Z"/>
 <!-- France -->
 <path fill="#3363e9" d="M998.5,674.4 L1005.8,671.25 L1014.2,673.3 L1015.2,677.5 L1014.2,682.7 L1005.8,684.8 L1003.75,681.7 L1001.7,676.5 Z"/>
 <!-- Germany -->
 <path fill="#3363e9" d="M1015.2,664 L1022.5,662.9 L1025.6,666 L1024.6,671.25 L1021.5,675.4 L1016.25,674.4 L1015.2,669.2 Z"/>
 <!-- Poland -->
 <path fill="#3363e9" d="M1027.7,662.9 L1036,662.9 L1040.2,666 L1039.2,671.25 L1032.9,672.3 L1027.7,669.2 Z"/>
 <!-- Ukraine -->
 <path fill="#2c56cc" d="M1040.2,669.2 L1051.7,668.1 L1056,669 L1063,671 L1066.5,674.5 L1063,678.5 L1056,679.5 L1049.6,678 L1040.2,674.4 Z"/>
 <!-- Italy -->
 <path fill="#2c53c2" d="M1016,680.5 L1020,678.8 L1023.5,678.6 L1023.3,682.5 L1027,686 L1030.5,689.5 L1029.5,692.5 L1026.5,691 L1022.5,687 L1019,683.5 Z"/>
 <!-- Spain -->
 <path fill="#3363e9" d="M991.25,684.8 L1005.8,685.8 L1002.7,690 L1000.6,695.2 L995.4,696.25 L994.4,690 Z"/>
 <!-- Russia -->
 <path fill="#3363e9" d="M1049.1,629.2 L1054.6,627.4 L1066.4,632.9 L1062.8,634.7 L1056.4,633.8 L1052.8,634.7 L1051.9,640 L1066.4,638.3 L1072.8,632.9 L1081,631 L1103.8,627.4 L1109.3,629.2 L1108.4,620.1 L1112.9,618.3 L1115.7,627.4 L1112.9,634.7 L1122,631 L1119.3,621.9 L1125.7,618.3 L1132,622.8 L1129.3,616.5 L1138.45,611.9 L1149.4,607.3 L1163.1,603.7 L1176.7,609.2 L1168.6,615.5 L1192.3,615.5 L1202.5,620.6 L1217.7,618.9 L1243.1,624 L1263.4,627.4 L1281.9,634.6 L1293.4,635.8 L1276,641.6 L1268,647.4 L1258.7,650 L1252.5,656 L1247.5,663 L1245.4,668.5 L1243,663 L1243.5,656 L1248.5,650 L1254,645.8 L1247,648.8 L1240.2,650.8 L1224,652 L1212.4,661.25 L1219.35,664.7 L1220.5,674 L1214.7,682.1 L1206.6,684.4 L1210,675.1 L1195,664.7 L1187,667 L1182.2,673.1 L1158.5,668 L1141.6,671.4 L1123.3,663.6 L1109.4,660.1 L1095.6,663.6 L1081.7,667.8 L1075.4,672 L1075.4,681.7 L1073,686.5 L1066,686 L1063,679 L1066.5,674.5 L1063,671 L1056,669 L1053.75,662.9 L1049.6,656.7 L1047.5,649.4 L1052.7,640 L1051.7,633.75 Z"/>
 <g fill="#3363e9" stroke="none">
  <path d="M1083.75,620.1 L1091,611 L1108.4,606 L1103.8,607.3 L1094.7,610 L1087.4,619.2 Z"/>
  <path d="M1145.7,592.8 L1152.1,592.8 L1164.9,599.1 L1157.6,601 L1147.6,596.4 Z"/>
  <path d="M1220.3,663.5 L1223.6,664.5 L1223.4,674 L1221.8,679.5 L1220.2,672 Z"/>
 </g>
 <!-- China -->
 <path fill="#3363e9" d="M1137.2,673.3 L1141.6,681.6 L1158.5,688.3 L1172,685 L1187.3,678.2 L1182.2,673.1 L1187,667 L1195,664.7 L1210,675.1 L1206.6,684.4 L1203.1,690.2 L1195,690.5 L1189,694 L1190,699.7 L1188.6,708 L1179,720.5 L1165,720.5 L1158,717.8 L1151,709.4 L1137,709.4 L1126,702.5 L1119,698.3 L1117.8,691.4 L1128.9,685.8 Z"/>
 <!-- Japan -->
 <g fill="#3363e9" stroke="none">
  <path d="M1220.5,684.4 L1225.1,684.4 L1222.8,687.5 L1220,687 Z"/>
  <path d="M1219.8,689.5 L1222,694.8 L1216.5,701 L1207.5,703.5 L1203,707 L1198.5,710 L1197,709 L1201,704.5 L1206,700.5 L1214.7,697.1 L1218.2,692.5 Z"/>
  <circle cx="1193.5" cy="715" r="1.2"/><circle cx="1191" cy="720" r="1"/>
 </g>
 <!-- Turkey -->
 <path fill="#2c53c2" d="M1046.5,690 L1057.9,688 L1070.4,689 L1071.5,694.2 L1057.9,695.2 L1047.5,694.2 Z"/>
 <!-- Syria/Iraq -->
 <path fill="#3363e9" d="M1066.1,696.2 L1076.9,696.2 L1076.9,708.7 L1068,706.9 Z"/>
 <!-- Iran -->
 <path fill="#2c53c2" d="M1073.9,695.1 L1085,694 L1097.5,696.8 L1099.2,708.6 L1092.5,715.4 L1078.9,705.3 Z"/>
 <!-- Turkmenistan/Uzbekistan -->
 <path fill="#3363e9" d="M1090.8,681.6 L1104.3,685 L1107.7,695.1 L1097.5,690 Z"/>
 <!-- Afghanistan -->
 <path fill="#3363e9" d="M1099.2,698.5 L1114.5,695.1 L1112.8,703.6 L1100.9,707 Z"/>
 <!-- Pakistan -->
 <path fill="#2c53c2" d="M1102,706.9 L1116.4,696.2 L1118.2,706.9 L1111,715.9 L1103.8,714.1 Z"/>
 <!-- Saudi Arabia -->
 <path fill="#3363e9" d="M1059,705.1 L1069.7,703.3 L1087.7,721.3 L1084.1,726.7 L1073.3,732 L1066.1,723.1 Z"/>
 <path fill="#3363e9" d="M1071.5,730.3 L1084.1,726.7 L1084.1,730.3 L1073.3,733.8 Z"/>
 <!-- India -->
 <path fill="#3363e9" d="M1112.8,717.7 L1118.2,697.9 L1132.5,708.7 L1150.5,710.5 L1141.5,721.3 L1123.6,742.8 L1116.4,724.9 Z"/>
 <!-- Africa -->
 <path fill="#3363e9" d="M990.8,699.7 L1001.5,697 L1001.5,703.3 L989,710.5 Z"/>
 <path fill="#3363e9" d="M991.7,709.6 L1001.5,701.5 L1015.9,697 L1017.7,716 L1012.3,724 L999.7,715.9 Z"/>
 <path fill="#3363e9" d="M1043.7,706.9 L1055.4,706.9 L1059,719.5 L1044.6,720.4 Z"/>
 <path fill="#2d58d0" d="M1042.8,721.3 L1059,720.4 L1060.8,730.3 L1057.2,737.4 L1048.2,739.2 L1039.2,737.4 Z"/>
 <path fill="#3363e9" d="M1059,735.6 L1069.7,735.6 L1076.9,744.6 L1068,748.2 L1059,744.6 Z"/>
 <path fill="#3363e9" d="M1010.5,737.4 L1024.9,735.6 L1021.3,742.8 L1014.1,746.4 Z"/>
 <path fill="#3363e9" d="M1000.6,739.2 L1004.2,739.2 L1004.2,746.4 L1000.6,746.4 Z"/>
 <path fill="#3363e9" d="M1032,750 L1050,749.1 L1051.8,757.2 L1048.2,771.5 L1037.4,766.1 L1028.5,762.6 Z"/>
 <path fill="#2d58d0" d="M1051.8,750 L1066.1,750 L1064.3,771.5 L1051.8,766.1 Z"/>
 <path fill="#3363e9" d="M1057.2,773.3 L1064.3,773.3 L1059,787.7 L1055.4,794.9 L1051.8,787.7 Z"/>
 <path fill="#3363e9" d="M1030.3,802 L1042.8,794.9 L1051.8,791.3 L1050,803.8 L1033.8,810.1 Z"/>
 <!-- SE Asia -->
 <path fill="#3363e9" d="M1155.2,725.8 L1162.2,726.6 L1163.75,734.4 L1157.5,734.4 Z"/>
 <path fill="#3363e9" d="M1151,748 L1156,749 L1161,754 L1165.8,760.5 L1165,764.5 L1160.5,763 L1155,757 L1151.5,752 Z"/>
 <path fill="#2c56cc" d="M1171.6,753.1 L1182.5,748.4 L1184,754.7 L1179.4,760.9 L1173.1,759.4 Z"/>
 <path fill="#3363e9" stroke="none" d="M1188.5,728 L1192,728.5 L1192.5,735 L1196.5,740 L1196.5,745.5 L1192.5,745 L1190,737 Z"/>
 <path fill="#3363e9" stroke="none" d="M1186,753 L1190.5,753 L1188.5,758 L1192,762 L1188,764 L1185.5,758 Z"/>
 <path fill="#3363e9" stroke="none" d="M1167,765 L1178,766 L1182,768.5 L1168,768.5 Z"/>
 <path fill="#2c56cc" d="M1212.2,759.4 L1220,761 L1220,767.2 L1214,766 Z"/>
 <!-- Australia -->
 <path fill="#3363e9" d="M1179.4,790.6 L1193.4,782.8 L1201.25,776.6 L1210.6,775 L1213.75,778.1 L1218.4,781.25 L1221.6,775 L1227.8,785.9 L1235.6,793.75 L1238,801.6 L1234,810.9 L1229.4,816.4 L1221.6,817.2 L1213.75,809.4 L1201.25,806.25 L1187.2,809.4 L1182.5,810.9 L1179.4,800 Z"/>
 <path fill="#3363e9" stroke="none" d="M1226,822 L1231,822 L1228.6,826 Z"/>
</g>
<rect x="853.7" y="633.9" width="52" height="16.4" fill="#fff" stroke="#777" stroke-width="1"/>
<text x="857" y="645.6" font-family="Liberation Sans" font-size="7.8" fill="#444">Canada, 0.33</text>
</g>

</svg>
<!-- scrollbars -->
<div class="a" style="left:1498.3px;top:149px;width:13px;height:713px;background:#e8e8ea"></div>
<div class="a" style="left:1498.3px;top:161.6px;width:13px;height:652px;background:#b5b5b5"></div>
<svg class="a" style="left:1498px;top:149px" width="14" height="713"><polyline points="3.5,9 6.8,5.8 10,9" fill="none" stroke="#8a8a8a" stroke-width="1"/><polyline points="3.5,705 6.8,708.2 10,705" fill="none" stroke="#8a8a8a" stroke-width="1"/></svg>
<div class="a" style="left:1523px;top:61px;width:13px;height:801px;background:#e8e8ea"></div>
<div class="a" style="left:1523px;top:74px;width:13px;height:731.5px;background:#b5b5b5"></div>
<svg class="a" style="left:1523px;top:61px" width="13" height="801"><polyline points="3,8.5 6.5,5 10,8.5" fill="none" stroke="#8a8a8a" stroke-width="1"/><polyline points="3,793 6.5,796.5 10,793" fill="none" stroke="#8a8a8a" stroke-width="1"/></svg>
<!-- bottom taskbar edge -->
<div class="a" style="left:0;top:862px;width:1536px;height:2px;background:#1e1e1e"></div>
<div class="a" style="left:38px;top:862px;width:276px;height:2px;background:#d8d8d8"></div>
</body></html>
